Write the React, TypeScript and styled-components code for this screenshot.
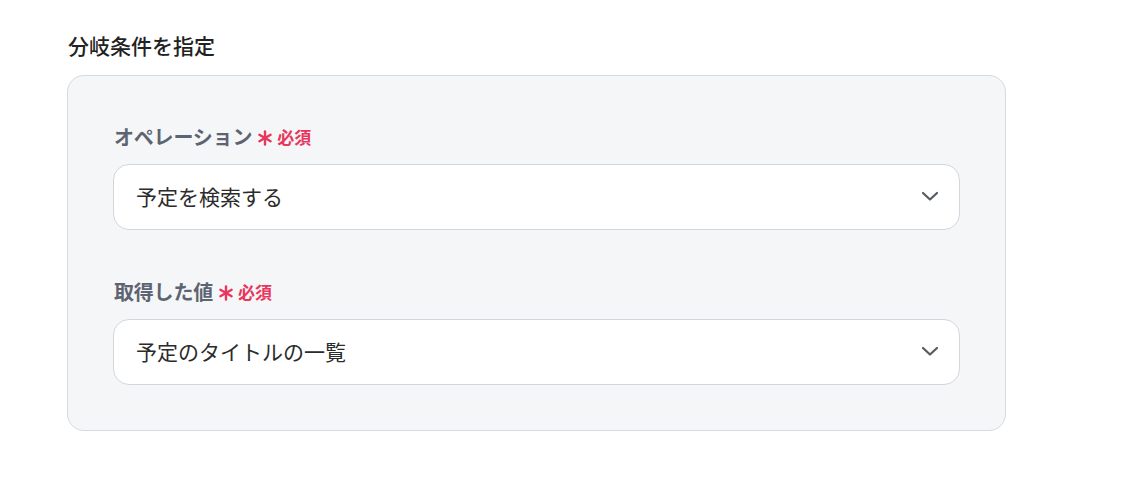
import styled, { createGlobalStyle } from "styled-components";

const GlobalStyle = createGlobalStyle`
  body {
    margin: 0;
    background: #ffffff;
    font-family: "Noto Sans CJK JP", "Noto Sans", sans-serif;
  }
`;

const Page = styled.div`
  padding: 32px 0 0 67px;
  width: 939px;
`;

const Title = styled.h2`
  margin: 0 0 17px 1px;
  font-size: 21px;
  font-weight: 500;
  line-height: 26px;
  color: #222222;
`;

const Panel = styled.section`
  display: flex;
  flex-direction: column;
  gap: 47px;
  padding: 46px 45px 45px 45px;
  background: #f5f6f8;
  border: 1px solid #d5d9e0;
  border-radius: 17px;
`;

const Field = styled.div`
  display: flex;
  flex-direction: column;
  gap: 14px;
`;

const Label = styled.div`
  display: flex;
  align-items: center;
  margin-left: 1px;
  height: 28px;
  font-size: 20px;
  font-weight: 700;
  letter-spacing: -0.2px;
  color: #5d6471;
`;

const Required = styled.span`
  display: inline-flex;
  align-items: center;
  gap: 4px;
  margin-left: 5px;
  font-size: 17px;
  font-weight: 700;
  letter-spacing: 0;
  color: #e8365d;
`;

const Select = styled.div`
  display: flex;
  align-items: center;
  justify-content: space-between;
  box-sizing: border-box;
  height: 66px;
  padding: 0 19px 2px 22px;
  background: #ffffff;
  border: 1px solid #d2d6dd;
  border-radius: 16px;
  font-size: 21px;
  color: #2b2b2b;
`;

const Star = () => (
  <svg width="16" height="16" viewBox="0 0 16 16" style={{ marginTop: 4 }}>
    <g stroke="#e8365d" strokeWidth="2.4" strokeLinecap="round">
      <line x1="8" y1="1.5" x2="8" y2="14.5" />
      <line x1="2.4" y1="4.75" x2="13.6" y2="11.25" />
      <line x1="2.4" y1="11.25" x2="13.6" y2="4.75" />
    </g>
  </svg>
);

const Chevron = () => (
  <svg width="20" height="20" viewBox="0 0 20 20">
    <path
      d="M3 7l7 6.5L17 7"
      fill="none"
      stroke="#555b63"
      strokeWidth="2.2"
      strokeLinecap="round"
      strokeLinejoin="round"
    />
  </svg>
);

const fields = [
  { label: "オペレーション", value: "予定を検索する" },
  { label: "取得した値", value: "予定のタイトルの一覧" },
];

export default function App() {
  return (
    <>
      <GlobalStyle />
      <Page>
        <Title>分岐条件を指定</Title>
        <Panel>
          {fields.map((f) => (
            <Field key={f.label}>
              <Label>
                {f.label}
                <Required>
                  <Star />
                  必須
                </Required>
              </Label>
              <Select>
                <span>{f.value}</span>
                <Chevron />
              </Select>
            </Field>
          ))}
        </Panel>
      </Page>
    </>
  );
}
